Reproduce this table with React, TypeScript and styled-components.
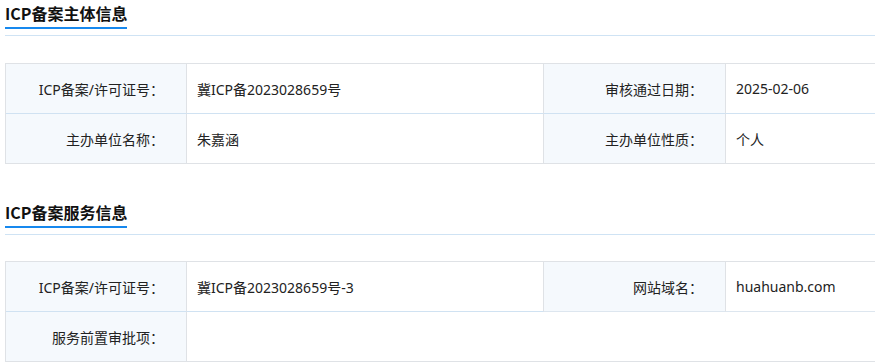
import React from "react";
import styled, { createGlobalStyle } from "styled-components";

const Global = createGlobalStyle`
  html, body { margin: 0; padding: 0; overflow: hidden; background: #fff; }
  body { font-family: "Noto Sans", "Noto Sans CJK SC", sans-serif; color: #222; }
`;

const Page = styled.div`
  padding: 0 0 0 5px;
  width: 870px;
  overflow: hidden;
`;

const Section = styled.section`
  & + & { margin-top: 35px; }
`;

const Heading = styled.div`
  border-bottom: 1px solid #cfe3f4;
  padding-bottom: 6px;
`;

const Title = styled.h2`
  display: inline-block;
  margin: 0;
  font-family: "Noto Sans CJK SC", sans-serif;
  font-size: 16px;
  font-weight: 700;
  line-height: 27px;
  color: #111;
  border-bottom: 2px solid #1688ee;
`;

const Grid = styled.div<{ $gap: number }>`
  margin-top: ${(p) => p.$gap}px;
  display: grid;
  width: 1220px;
  grid-template-columns: 181px 357px 182px 500px;
  border-top: 1px solid #dfe2e6;
  border-left: 1px solid #dfe2e6;
`;

const Cell = styled.div<{ $label?: boolean; $span?: number; $sep?: string }>`
  display: flex;
  align-items: center;
  box-sizing: border-box;
  height: 50px;
  font-size: 14px;
  color: #222;
  background: ${(p) => (p.$label ? "#f5f9fd" : "#fff")};
  justify-content: ${(p) => (p.$label ? "flex-end" : "flex-start")};
  padding: ${(p) => (p.$label ? "0 22px 0 0" : "0 0 0 10px")};
  border-right: 1px solid #dfe2e6;
  border-bottom: 1px solid ${(p) => p.$sep ?? "#dfe2e6"};
  grid-column: span ${(p) => p.$span ?? 1};
`;

const BLUE = "#d0e2f2";

export default function App() {
  return (
    <>
      <Global />
      <Page>
        <Section>
          <Heading>
            <Title>ICP备案主体信息</Title>
          </Heading>
          <Grid $gap={27}>
            <Cell $label $sep={BLUE}>ICP备案/许可证号：</Cell>
            <Cell $sep={BLUE}>冀ICP备2023028659号</Cell>
            <Cell $label $sep={BLUE}>审核通过日期：</Cell>
            <Cell $sep={BLUE}>2025-02-06</Cell>
            <Cell $label>主办单位名称：</Cell>
            <Cell>朱嘉涵</Cell>
            <Cell $label>主办单位性质：</Cell>
            <Cell>个人</Cell>
          </Grid>
        </Section>
        <Section>
          <Heading>
            <Title>ICP备案服务信息</Title>
          </Heading>
          <Grid $gap={26}>
            <Cell $label $sep={BLUE}>ICP备案/许可证号：</Cell>
            <Cell $sep={BLUE}>冀ICP备2023028659号-3</Cell>
            <Cell $label $sep="#dde6ef">网站域名：</Cell>
            <Cell $sep="#dde6ef">huahuanb.com</Cell>
            <Cell $label>服务前置审批项：</Cell>
            <Cell $span={3}></Cell>
          </Grid>
        </Section>
      </Page>
    </>
  );
}
